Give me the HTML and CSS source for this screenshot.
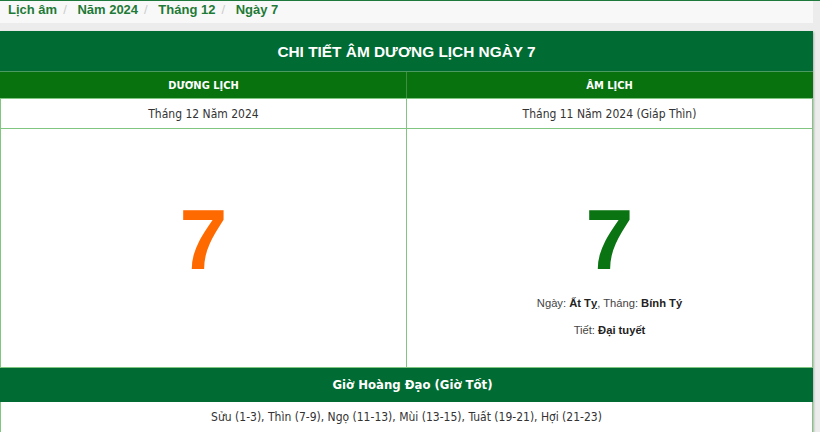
FILE: index.html
```html
<!DOCTYPE html>
<html lang="vi">
<head>
<meta charset="utf-8">
<link rel="stylesheet" href="styles.css">
</head>
<body>
<div class="topline"></div>
<div class="page">
  <nav class="breadcrumb">
    <a href="#">Lịch âm</a><span class="sep">/</span>
    <a href="#">Năm 2024</a><span class="sep">/</span>
    <a href="#">Tháng 12</a><span class="sep">/</span>
    <a href="#">Ngày 7</a>
  </nav>
  <table class="cal">
    <tr><th colspan="2" class="title">CHI TIẾT ÂM DƯƠNG LỊCH NGÀY 7</th></tr>
    <tr><th class="colhead">DƯƠNG LỊCH</th><th class="colhead">ÂM LỊCH</th></tr>
    <tr><td class="month">Tháng 12 Năm 2024</td><td class="month">Tháng 11 Năm 2024 (Giáp Thìn)</td></tr>
    <tr>
      <td class="day"><div class="big solar">7</div></td>
      <td class="day">
        <div class="big lunar">7</div>
        <p class="info">Ngày: <b>Ất Tỵ</b>, Tháng: <b>Bính Tý</b></p>
        <p class="info">Tiết: <b>Đại tuyết</b></p>
      </td>
    </tr>
    <tr><th colspan="2" class="section">Giờ Hoàng Đạo (Giờ Tốt)</th></tr>
    <tr><td colspan="2" class="hours">Sửu (1-3), Thìn (7-9), Ngọ (11-13), Mùi (13-15), Tuất (19-21), Hợi (21-23)</td></tr>
  </table>
</div>
</body>
</html>
```
FILE: styles.css
```css
html, body {
  margin: 0;
  padding: 0;
  background: #ececec;
  height: 100%;
  overflow: hidden;
}
.topline {
  height: 1px;
  background: #1d7a3c;
}
.page {
  width: 813px;
}
.breadcrumb {
  height: 22px;
  background: #f8f8f8;
  padding-left: 8px;
  font-family: "Liberation Sans", Arial, sans-serif;
  font-size: 13px;
  font-weight: bold;
  line-height: 18px;
  margin-bottom: 8px;
}
.breadcrumb a {
  color: #1e7a36;
  text-decoration: none;
}
.breadcrumb .sep {
  color: #cccccc;
  font-weight: normal;
  padding: 0 7px 0 6px;
}
.cal {
  width: 813px;
  border-collapse: collapse;
  background: #ffffff;
  box-shadow: 1px 1px 2px rgba(0,0,0,0.25);
  font-family: "DejaVu Sans Condensed", Tahoma, sans-serif;
}
.cal th, .cal td {
  border: 1px solid #80c680;
  padding: 0;
  text-align: center;
}
.title {
  background: #006b33;
  color: #ffffff;
  height: 39px;
  font-family: "Liberation Sans", Arial, sans-serif;
  font-size: 15.4px;
  font-weight: bold;
  border-color: #006b33 #006b33 #4a9a62 #006b33 !important;
}
.colhead {
  width: 50%;
  background: #08720e;
  color: #ffffff;
  height: 26px;
  font-size: 11px;
  font-weight: bold;
  border-top-color: #4a9a62 !important;
  border-left-color: #08720e !important;
  border-right: 1px solid #3b8f40 !important;
}
.colhead + .colhead { border-right-color: #08720e !important; }
.month {
  height: 29px;
  font-size: 12px;
  color: #333333;
}
.day {
  height: 239px;
  vertical-align: top;
  padding-top: 72px !important;
  box-sizing: border-box;
}
.big {
  font-family: "Liberation Sans", Arial, sans-serif;
  font-weight: bold;
  font-size: 86px;
  line-height: 76px;
}
.solar { color: #ff6a00; }
.lunar { color: #0b7412; }
.info {
  margin: 20px 0 0;
  font-family: "Liberation Sans", Arial, sans-serif;
  font-size: 11.2px;
  color: #444444;
}
.info + .info { margin-top: 15px; }
.info b { color: #222222; }
.section {
  background: #006b33;
  color: #ffffff;
  height: 33px;
  font-size: 13px;
  font-weight: bold;
  padding-left: 12px !important;
  border-color: #006b33 !important;
  border-top-color: #80c680 !important;
}
.hours {
  height: 30px;
  font-size: 12px;
  color: #333333;
}
```
